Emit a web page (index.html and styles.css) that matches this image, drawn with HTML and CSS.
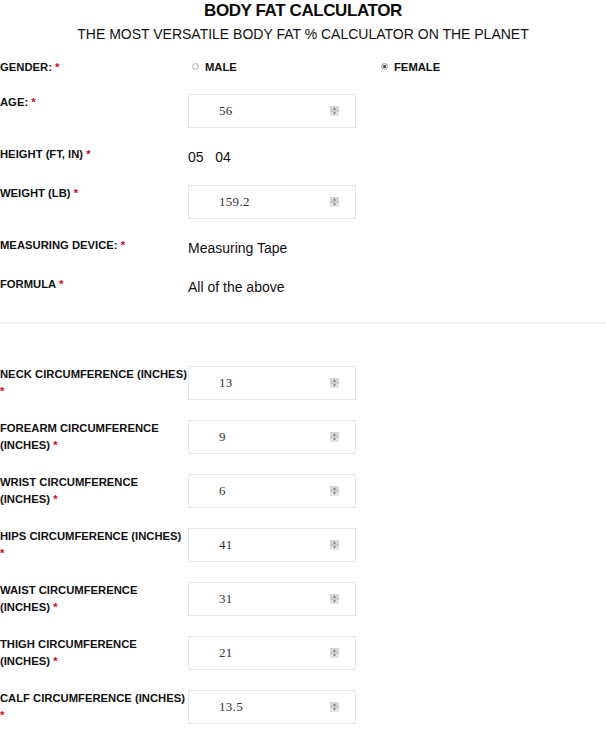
FILE: index.html
```html
<!DOCTYPE html>
<html>
<head>
<meta charset="utf-8">
<link rel="stylesheet" href="styles.css">
</head>
<body>
<div class="page">
  <h1 class="title">BODY FAT CALCULATOR</h1>
  <p class="subtitle">THE MOST VERSATILE BODY FAT % CALCULATOR ON THE PLANET</p>

  <div class="row row-gender">
    <div class="label">GENDER: <span class="req">*</span></div>
    <div class="radios">
      <div class="option"><span class="radio"></span>MALE</div>
      <div class="option"><span class="radio checked"></span>FEMALE</div>
    </div>
  </div>

  <div class="row">
    <div class="label">AGE: <span class="req">*</span></div>
    <div class="input"><span class="val">56</span><svg class="spin" width="9" height="10" viewBox="0 0 9 10"><rect x="0" y="0" width="9" height="10" fill="#e4e4e4"/><rect x="0" y="0" width="9" height="4.5" fill="#d6d6d6"/><line x1="0" y1="5" x2="9" y2="5" stroke="#b0b0b0" stroke-width="1"/><path d="M3 3.5 L4.5 1.5 L6 3.5 Z" fill="#666"/><path d="M3 6.5 L4.5 8.5 L6 6.5 Z" fill="#666"/></svg></div>
  </div>

  <div class="row">
    <div class="label">HEIGHT (FT, IN) <span class="req">*</span></div>
    <div class="value">05&nbsp;&nbsp; 04</div>
  </div>

  <div class="row">
    <div class="label">WEIGHT (LB) <span class="req">*</span></div>
    <div class="input"><span class="val">159.2</span><svg class="spin" width="9" height="10" viewBox="0 0 9 10"><rect x="0" y="0" width="9" height="10" fill="#e4e4e4"/><rect x="0" y="0" width="9" height="4.5" fill="#d6d6d6"/><line x1="0" y1="5" x2="9" y2="5" stroke="#b0b0b0" stroke-width="1"/><path d="M3 3.5 L4.5 1.5 L6 3.5 Z" fill="#666"/><path d="M3 6.5 L4.5 8.5 L6 6.5 Z" fill="#666"/></svg></div>
  </div>

  <div class="row">
    <div class="label">MEASURING DEVICE: <span class="req">*</span></div>
    <div class="value">Measuring Tape</div>
  </div>

  <div class="row row-last">
    <div class="label">FORMULA <span class="req">*</span></div>
    <div class="value">All of the above</div>
  </div>

  <hr class="sep sep-top">

  <div class="circ">
    <div class="row">
      <div class="label">NECK CIRCUMFERENCE (INCHES) <span class="req">*</span></div>
      <div class="input"><span class="val">13</span><svg class="spin" width="9" height="10" viewBox="0 0 9 10"><rect x="0" y="0" width="9" height="10" fill="#e4e4e4"/><rect x="0" y="0" width="9" height="4.5" fill="#d6d6d6"/><line x1="0" y1="5" x2="9" y2="5" stroke="#b0b0b0" stroke-width="1"/><path d="M3 3.5 L4.5 1.5 L6 3.5 Z" fill="#666"/><path d="M3 6.5 L4.5 8.5 L6 6.5 Z" fill="#666"/></svg></div>
    </div>
    <div class="row">
      <div class="label">FOREARM CIRCUMFERENCE (INCHES) <span class="req">*</span></div>
      <div class="input"><span class="val">9</span><svg class="spin" width="9" height="10" viewBox="0 0 9 10"><rect x="0" y="0" width="9" height="10" fill="#e4e4e4"/><rect x="0" y="0" width="9" height="4.5" fill="#d6d6d6"/><line x1="0" y1="5" x2="9" y2="5" stroke="#b0b0b0" stroke-width="1"/><path d="M3 3.5 L4.5 1.5 L6 3.5 Z" fill="#666"/><path d="M3 6.5 L4.5 8.5 L6 6.5 Z" fill="#666"/></svg></div>
    </div>
    <div class="row">
      <div class="label">WRIST CIRCUMFERENCE (INCHES) <span class="req">*</span></div>
      <div class="input"><span class="val">6</span><svg class="spin" width="9" height="10" viewBox="0 0 9 10"><rect x="0" y="0" width="9" height="10" fill="#e4e4e4"/><rect x="0" y="0" width="9" height="4.5" fill="#d6d6d6"/><line x1="0" y1="5" x2="9" y2="5" stroke="#b0b0b0" stroke-width="1"/><path d="M3 3.5 L4.5 1.5 L6 3.5 Z" fill="#666"/><path d="M3 6.5 L4.5 8.5 L6 6.5 Z" fill="#666"/></svg></div>
    </div>
    <div class="row">
      <div class="label">HIPS CIRCUMFERENCE (INCHES) <span class="req">*</span></div>
      <div class="input"><span class="val">41</span><svg class="spin" width="9" height="10" viewBox="0 0 9 10"><rect x="0" y="0" width="9" height="10" fill="#e4e4e4"/><rect x="0" y="0" width="9" height="4.5" fill="#d6d6d6"/><line x1="0" y1="5" x2="9" y2="5" stroke="#b0b0b0" stroke-width="1"/><path d="M3 3.5 L4.5 1.5 L6 3.5 Z" fill="#666"/><path d="M3 6.5 L4.5 8.5 L6 6.5 Z" fill="#666"/></svg></div>
    </div>
    <div class="row">
      <div class="label">WAIST CIRCUMFERENCE (INCHES) <span class="req">*</span></div>
      <div class="input"><span class="val">31</span><svg class="spin" width="9" height="10" viewBox="0 0 9 10"><rect x="0" y="0" width="9" height="10" fill="#e4e4e4"/><rect x="0" y="0" width="9" height="4.5" fill="#d6d6d6"/><line x1="0" y1="5" x2="9" y2="5" stroke="#b0b0b0" stroke-width="1"/><path d="M3 3.5 L4.5 1.5 L6 3.5 Z" fill="#666"/><path d="M3 6.5 L4.5 8.5 L6 6.5 Z" fill="#666"/></svg></div>
    </div>
    <div class="row">
      <div class="label">THIGH CIRCUMFERENCE (INCHES) <span class="req">*</span></div>
      <div class="input"><span class="val">21</span><svg class="spin" width="9" height="10" viewBox="0 0 9 10"><rect x="0" y="0" width="9" height="10" fill="#e4e4e4"/><rect x="0" y="0" width="9" height="4.5" fill="#d6d6d6"/><line x1="0" y1="5" x2="9" y2="5" stroke="#b0b0b0" stroke-width="1"/><path d="M3 3.5 L4.5 1.5 L6 3.5 Z" fill="#666"/><path d="M3 6.5 L4.5 8.5 L6 6.5 Z" fill="#666"/></svg></div>
    </div>
    <div class="row row-last">
      <div class="label">CALF CIRCUMFERENCE (INCHES) <span class="req">*</span></div>
      <div class="input"><span class="val">13.5</span><svg class="spin" width="9" height="10" viewBox="0 0 9 10"><rect x="0" y="0" width="9" height="10" fill="#e4e4e4"/><rect x="0" y="0" width="9" height="4.5" fill="#d6d6d6"/><line x1="0" y1="5" x2="9" y2="5" stroke="#b0b0b0" stroke-width="1"/><path d="M3 3.5 L4.5 1.5 L6 3.5 Z" fill="#666"/><path d="M3 6.5 L4.5 8.5 L6 6.5 Z" fill="#666"/></svg></div>
    </div>
  </div>

  <hr class="sep sep-bottom">
</div>
</body>
</html>
```

FILE: styles.css
```css
html, body {
  margin: 0;
  padding: 0;
  background: #ffffff;
}

body {
  font-family: "Liberation Sans", Arial, sans-serif;
  color: #111111;
}

.page {
  width: 606px;
}

.title {
  margin: 0;
  padding-top: 1px;
  font-size: 17px;
  line-height: 19px;
  font-weight: bold;
  letter-spacing: -0.4px;
  text-align: center;
  color: #0a0a0a;
}

.subtitle {
  margin: 6px 0 0 0;
  font-size: 14px;
  line-height: 16px;
  text-align: center;
  color: #111111;
}

.row {
  display: flex;
  align-items: flex-start;
  margin-bottom: 18px;
}

.row-gender {
  margin-top: 17px;
}

.row-last {
  margin-bottom: 0;
}

.label {
  width: 188px;
  flex: 0 0 188px;
  font-size: 11.25px;
  line-height: 17px;
  font-weight: bold;
  color: #111111;
}

.req {
  color: #d0021b;
}

.radios {
  display: flex;
}

.option {
  width: 189px;
  display: flex;
  align-items: center;
  font-size: 11.25px;
  line-height: 17px;
  font-weight: bold;
  padding-left: 4px;
  box-sizing: border-box;
}

.radio {
  width: 5px;
  height: 5px;
  border: 1px solid #b5b5b5;
  border-radius: 50%;
  margin-right: 6px;
  margin-top: -2px;
  background: #f7f7f7;
  position: relative;
}

.radio.checked {
  border-color: #9a9a9a;
  background: radial-gradient(circle, #444 0 1.3px, #f0f0f0 1.6px);
}

.input {
  width: 168px;
  height: 34px;
  box-sizing: border-box;
  border: 1px solid #e6e6e6;
  background: #ffffff;
  display: flex;
  align-items: center;
  padding: 0 16px 0 30px;
}

.val {
  flex: 1;
  font-family: "Liberation Serif", "Times New Roman", serif;
  font-size: 13px;
  color: #333333;
  letter-spacing: 0.3px;
}

.spin {
  display: block;
}

.value {
  font-size: 14px;
  line-height: 20px;
  padding-top: 1px;
  color: #111111;
}

.sep {
  border: 0;
  height: 2px;
  background: #efefef;
  margin: 0;
}

.sep-top {
  margin-top: 25px;
}

.circ {
  padding-top: 42px;
}

.circ .row {
  margin-bottom: 20px;
}

.circ .row-last {
  margin-bottom: 0;
}

.sep-bottom {
  margin-top: 26px;
}
```
